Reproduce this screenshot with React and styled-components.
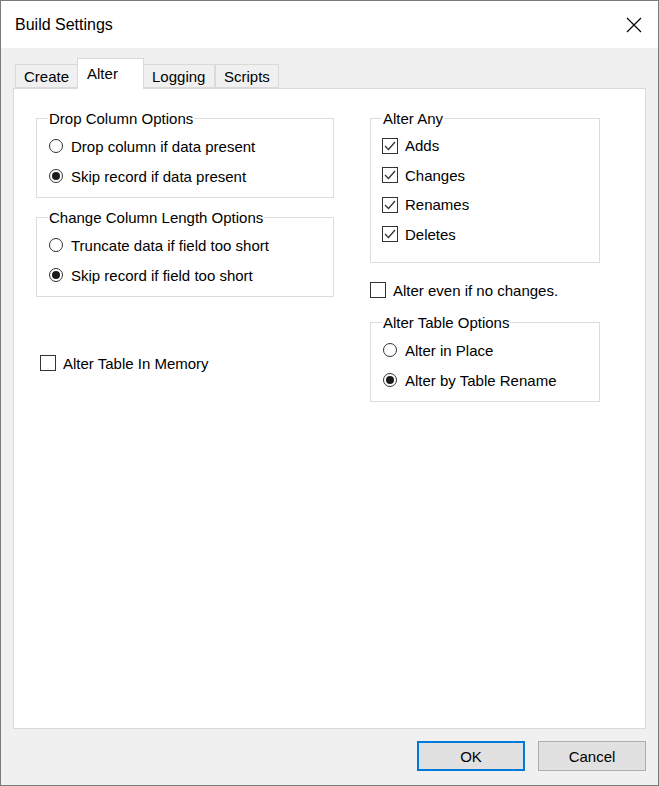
import React from "react";
import styled, { createGlobalStyle } from "styled-components";

const Global = createGlobalStyle`
  html, body { margin: 0; padding: 0; background: #fff; }
  body { font-family: "Liberation Sans", Arial, sans-serif; font-size: 15px; color: #000; }
`;

const Window = styled.div`
  width: 659px;
  height: 786px;
  box-sizing: border-box;
  border: 1px solid #7a7a7a;
  background: #f0f0f0;
  display: flex;
  flex-direction: column;
`;

const TitleBar = styled.div`
  height: 47px;
  background: #fff;
  display: flex;
  align-items: center;
  justify-content: space-between;
  padding: 0 16px 0 14px;
  font-size: 16px;
  flex-shrink: 0;
`;

const Body = styled.div`
  flex: 1;
  display: flex;
  flex-direction: column;
  padding: 10px 12px 14px 12px;
`;

const TabRow = styled.div`
  display: flex;
  align-items: flex-end;
  height: 30px;
  padding-left: 2px;
  position: relative;
  z-index: 1;
`;

const Tab = styled.div`
  height: ${(p) => (p.$active ? "31px" : "24px")};
  box-sizing: border-box;
  padding: ${(p) => (p.$active ? "6px 9px 0 9px" : "3px 8px 0 8px")};
  margin: ${(p) => (p.$active ? "0 -1px -1px -1px" : "0")};
  border: 1px solid #d9d9d9;
  border-bottom: ${(p) => (p.$active ? "none" : "1px solid #d9d9d9")};
  background: ${(p) => (p.$active ? "#fff" : "#f0f0f0")};
  min-width: ${(p) => p.$w}px;
  position: relative;
  z-index: ${(p) => (p.$active ? 2 : 1)};
`;

const Panel = styled.div`
  flex: 1;
  background: #fff;
  border: 1px solid #d9d9d9;
  display: flex;
  gap: 36px;
  padding: 21px 22px;
`;

const Column = styled.div`
  display: flex;
  flex-direction: column;
  width: ${(p) => p.$w}px;
`;

const Group = styled.fieldset`
  margin: ${(p) => p.$mt || 0}px 0 ${(p) => p.$mb || 0}px 0;
  padding: 4px 11px ${(p) => p.$pb || 6}px 11px;
  border: 1px solid #dcdcdc;
  min-width: 0;
`;

const Legend = styled.legend`
  padding: 0 1px;
  margin-left: 0;
  font-size: 15px;
  color: #000;
`;

const Option = styled.label`
  display: flex;
  align-items: center;
  height: ${(p) => p.$h || 30}px;
  gap: ${(p) => p.$gap || 8}px;
  margin-top: ${(p) => p.$mt || 0}px;
  padding-left: ${(p) => p.$pl || 0}px;
  white-space: nowrap;
`;

const Radio = styled.span`
  width: 14px;
  height: 14px;
  box-sizing: border-box;
  border-radius: 50%;
  border: 1px solid #333;
  background: #fff;
  display: flex;
  align-items: center;
  justify-content: center;
  flex-shrink: 0;
  margin-left: 1px;
  &::after {
    content: "";
    width: 8px;
    height: 8px;
    border-radius: 50%;
    background: ${(p) => (p.$on ? "#1a1a1a" : "transparent")};
  }
`;

const Box = styled.span`
  width: 16px;
  height: 16px;
  box-sizing: border-box;
  border: 1px solid #333;
  background: #fff;
  flex-shrink: 0;
  display: flex;
  align-items: center;
  justify-content: center;
`;

const Check = ({ on }) => (
  <Box>
    {on && (
      <svg width="12" height="12" viewBox="0 0 12 12">
        <path d="M1 6 L4.5 9.5 L11 2" fill="none" stroke="#333" strokeWidth="1.3" />
      </svg>
    )}
  </Box>
);

const Footer = styled.div`
  display: flex;
  justify-content: flex-end;
  gap: 13px;
  padding-top: 12px;
`;

const Button = styled.button`
  width: 108px;
  height: 30px;
  font-family: inherit;
  font-size: 15px;
  background: #e1e1e1;
  border: ${(p) => (p.$default ? "2px solid #0078d7" : "1px solid #adadad")};
  color: #000;
`;

export default function App() {
  return (
    <>
      <Global />
      <Window>
        <TitleBar>
          <span>Build Settings</span>
          <svg width="16" height="16" viewBox="0 0 16 16">
            <path d="M1 1 L15 15 M15 1 L1 15" stroke="#000" strokeWidth="1.2" />
          </svg>
        </TitleBar>
        <Body>
          <TabRow>
            <Tab $w={62}>Create</Tab>
            <Tab $active $w={67}>Alter</Tab>
            <Tab $w={72}>Logging</Tab>
            <Tab $w={63}>Scripts</Tab>
          </TabRow>
          <Panel>
            <Column $w={298}>
              <Group $mb={11}>
                <Legend>Drop Column Options</Legend>
                <Option><Radio />Drop column if data present</Option>
                <Option><Radio $on />Skip record if data present</Option>
              </Group>
              <Group>
                <Legend>Change Column Length Options</Legend>
                <Option><Radio />Truncate data if field too short</Option>
                <Option><Radio $on />Skip record if field too short</Option>
              </Group>
              <Option $mt={51} $pl={4} $gap={7}>
                <Check />Alter Table In Memory
              </Option>
            </Column>
            <Column $w={230}>
              <Group $pb={13}>
                <Legend>Alter Any</Legend>
                <Option $h={29.5} $gap={7}><Check on />Adds</Option>
                <Option $h={29.5} $gap={7}><Check on />Changes</Option>
                <Option $h={29.5} $gap={7}><Check on />Renames</Option>
                <Option $h={29.5} $gap={7}><Check on />Deletes</Option>
              </Group>
              <Option $mt={12} $gap={7}><Check />Alter even if no changes.</Option>
              <Group $mt={9}>
                <Legend>Alter Table Options</Legend>
                <Option><Radio />Alter in Place</Option>
                <Option><Radio $on />Alter by Table Rename</Option>
              </Group>
            </Column>
          </Panel>
          <Footer>
            <Button $default>OK</Button>
            <Button>Cancel</Button>
          </Footer>
        </Body>
      </Window>
    </>
  );
}
